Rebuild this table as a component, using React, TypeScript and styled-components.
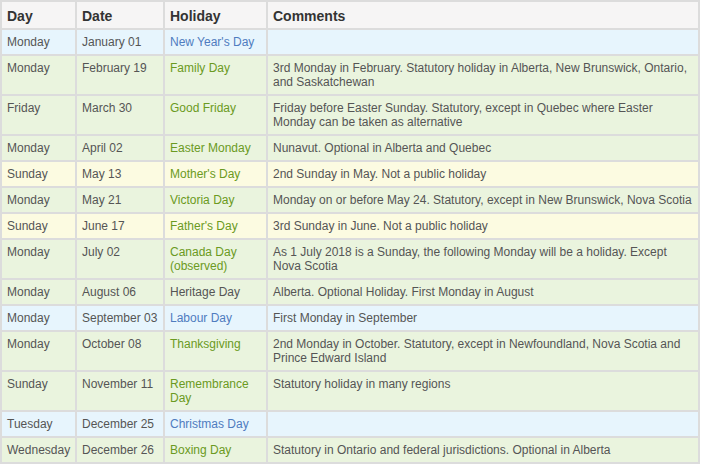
import React from "react";
import styled, { createGlobalStyle } from "styled-components";

const Global = createGlobalStyle`
  html, body { margin: 0; padding: 0; background: #ffffff; }
  body { font-family: "Liberation Sans", Arial, sans-serif; }
`;

type Tone = "blue" | "green" | "yellow";

const rowBg: Record<Tone, string> = {
  blue: "#e7f5fd",
  green: "#eaf4de",
  yellow: "#fcfbe1",
};

const holidayColor: Record<string, string> = {
  blue: "#4f7cbf",
  green: "#6b9a22",
  plain: "#555555",
};

const Table = styled.table`
  width: 698px;
  table-layout: fixed;
  border-collapse: collapse;
  border: 2px solid #dcdcdc;
  font-size: 12px;
  line-height: 14px;
  color: #555555;
`;

const HeadCell = styled.th`
  background: #f6f5f5;
  color: #333333;
  font-size: 14px;
  font-weight: bold;
  line-height: 16px;
  text-align: left;
  padding: 6px 4px 4px 5px;
  border: 2px solid #dcdcdc;
`;

const Row = styled.tr<{ $tone: Tone }>`
  background: ${(p) => rowBg[p.$tone]};
`;

const Cell = styled.td`
  padding: 5px 4px 5px 5px;
  vertical-align: top;
  border: 2px solid #dcdcdc;
`;

const HolidayCell = styled(Cell)<{ $kind: string }>`
  color: ${(p) => holidayColor[p.$kind]};
`;

type Item = {
  day: string;
  date: string;
  holiday: string;
  comment: string;
  tone: Tone;
  kind?: string;
};

const items: Item[] = [
  { day: "Monday", date: "January 01", holiday: "New Year's Day", comment: "", tone: "blue" },
  { day: "Monday", date: "February 19", holiday: "Family Day", comment: "3rd Monday in February. Statutory holiday in Alberta, New Brunswick, Ontario, and Saskatchewan", tone: "green" },
  { day: "Friday", date: "March 30", holiday: "Good Friday", comment: "Friday before Easter Sunday. Statutory, except in Quebec where Easter Monday can be taken as alternative", tone: "green" },
  { day: "Monday", date: "April 02", holiday: "Easter Monday", comment: "Nunavut. Optional in Alberta and Quebec", tone: "green" },
  { day: "Sunday", date: "May 13", holiday: "Mother's Day", comment: "2nd Sunday in May. Not a public holiday", tone: "yellow" },
  { day: "Monday", date: "May 21", holiday: "Victoria Day", comment: "Monday on or before May 24. Statutory, except in New Brunswick, Nova Scotia", tone: "green" },
  { day: "Sunday", date: "June 17", holiday: "Father's Day", comment: "3rd Sunday in June. Not a public holiday", tone: "yellow" },
  { day: "Monday", date: "July 02", holiday: "Canada Day (observed)", comment: "As 1 July 2018 is a Sunday, the following Monday will be a holiday. Except Nova Scotia", tone: "green" },
  { day: "Monday", date: "August 06", holiday: "Heritage Day", comment: "Alberta. Optional Holiday. First Monday in August", tone: "green", kind: "plain" },
  { day: "Monday", date: "September 03", holiday: "Labour Day", comment: "First Monday in September", tone: "blue" },
  { day: "Monday", date: "October 08", holiday: "Thanksgiving", comment: "2nd Monday in October. Statutory, except in Newfoundland, Nova Scotia and Prince Edward Island", tone: "green" },
  { day: "Sunday", date: "November 11", holiday: "Remembrance Day", comment: "Statutory holiday in many regions", tone: "green" },
  { day: "Tuesday", date: "December 25", holiday: "Christmas Day", comment: "", tone: "blue" },
  { day: "Wednesday", date: "December 26", holiday: "Boxing Day", comment: "Statutory in Ontario and federal jurisdictions. Optional in Alberta", tone: "green" },
];

export default function App() {
  return (
    <>
      <Global />
      <Table>
        <colgroup>
          <col style={{ width: 75 }} />
          <col style={{ width: 88 }} />
          <col style={{ width: 103 }} />
          <col style={{ width: 432 }} />
        </colgroup>
        <thead>
          <tr>
            <HeadCell>Day</HeadCell>
            <HeadCell>Date</HeadCell>
            <HeadCell>Holiday</HeadCell>
            <HeadCell>Comments</HeadCell>
          </tr>
        </thead>
        <tbody>
          {items.map((it, i) => (
            <Row key={i} $tone={it.tone}>
              <Cell>{it.day}</Cell>
              <Cell>{it.date}</Cell>
              <HolidayCell $kind={it.kind ?? (it.tone === "blue" ? "blue" : "green")}>{it.holiday}</HolidayCell>
              <Cell>{it.comment}</Cell>
            </Row>
          ))}
        </tbody>
      </Table>
    </>
  );
}
